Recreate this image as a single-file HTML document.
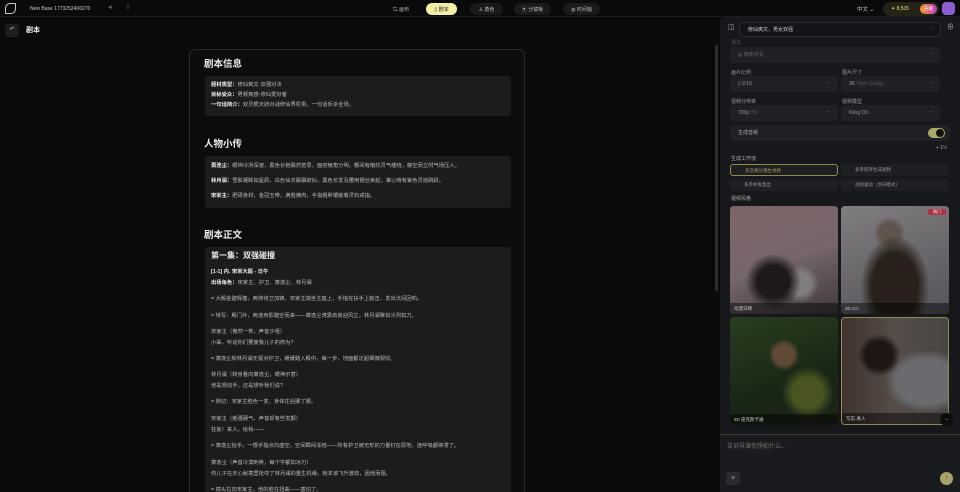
<!DOCTYPE html>
<html><head><meta charset="utf-8"><style>
*{box-sizing:border-box;margin:0;padding:0}
html{width:960px;height:492px;overflow:hidden}
body{width:960px;height:492px;overflow:hidden;background:#0a0a0a;font-family:"Liberation Sans","Noto Sans CJK SC",sans-serif;color:#ddd;position:relative}
.a{position:absolute}
.pill{position:absolute;top:3px;height:12px;border-radius:6px;background:#1a1a1c;font-size:5px;color:#bbb;display:flex;align-items:center;justify-content:center;gap:3px}
.card{left:189px;top:49px;width:336px;height:443px;border:1px solid #2a2a2a;border-bottom:none;border-radius:6px 6px 0 0;background:#0c0c0c;overflow:hidden}
.h{font-size:9.5px;font-weight:bold;color:#eee}
.box{background:#1c1c1e;border-radius:3px;position:absolute;left:15px;width:306px;font-size:5.3px;color:#bbb;padding:0 6px}
.box p{height:10px;line-height:10px;white-space:nowrap}
.box b{color:#eee}
.ep p{position:absolute;left:6px}
.rp{left:720px;top:17px;width:240px;height:475px;background:#17181b;border-radius:6px 0 0 0;overflow:hidden}
.lbl{position:absolute;font-size:5px;color:#9a9a9a}
.sel{position:absolute;height:16px;background:#202125;border-radius:4px;font-size:5px;color:#999;padding-left:8px;line-height:16px}
.sel:after{content:"⌄";position:absolute;right:7px;top:-2px;color:#666}
.btn{position:absolute;height:12px;width:108px;background:#1e1f23;border-radius:3px;font-size:4.5px;color:#999;line-height:12px;padding-left:14px}
.img{position:absolute;width:108px;height:108px;border-radius:4px;overflow:hidden}
.img:before{content:"";position:absolute;left:0;top:0;right:0;bottom:0;background:rgba(0,0,0,.3)}
.img span{position:absolute;left:0;right:0;bottom:0;height:11px;background:rgba(0,0,0,.45);font-size:4.5px;color:#ccc;padding-left:4px;line-height:11px}
</style></head><body>
<div class="a" style="left:0;top:0;width:960px;height:17px;border-bottom:1px solid #1c1c1c"></div>
<div class="a" style="left:5px;top:3px;width:11px;height:11px;border:1.3px solid #ccc;border-radius:5px 1px 5px 1px"></div>
<div class="a" style="left:30px;top:6px;font-size:5px;color:#ccc">New Base 1773252406270</div>
<div class="a" style="left:108px;top:4px;font-size:6px;color:#aaa">⋖</div>
<div class="a" style="left:125px;top:4px;font-size:6px;color:#aaa">⋮</div>
<div class="pill" style="left:386px;width:30px;background:none">⇆ 画布</div>
<div class="pill" style="left:426px;width:31px;background:#f3f0a6;color:#222">▯ 剧本</div>
<div class="pill" style="left:470px;width:33px">♙ 角色</div>
<div class="pill" style="left:514px;width:37px">▣ 分镜板</div>
<div class="pill" style="left:563px;width:37px">◍ 时间轴</div>
<div class="a" style="left:857px;top:5px;font-size:5.5px;color:#ccc">中文 ⌄</div>
<div class="a" style="left:883px;top:2px;width:56px;height:14px;border-radius:7px;background:#232318;font-size:5px;color:#e8d97a;line-height:14px;padding-left:8px">✦ 8,505</div>
<div class="a" style="left:920px;top:4px;width:17px;height:10px;border-radius:5px;background:linear-gradient(90deg,#f5a020,#c03ad0);font-size:4.5px;color:#fff;text-align:center;line-height:10px">升级</div>
<div class="a" style="left:942px;top:2px;width:13px;height:13px;border-radius:4px;background:#8b5fd0"></div>
<div class="a" style="left:5px;top:24px;width:14px;height:13px;border-radius:3px;background:#1d1d1d;font-size:6px;color:#bbb;text-align:center;line-height:13px">↶</div>
<div class="a h" style="left:26px;top:25px;font-size:7px">剧本</div>
<div class="a card">
<div class="a h" style="left:14px;top:6px">剧本信息</div>
<div class="box" style="top:26px;height:40px;padding-top:4px">
<p><b>题材类型：</b>修仙爽文·双强对决</p><p><b>目标受众：</b>男频爽感·修仙爱好者</p><p><b>一句话简介：</b>双灵根天骄对战修仙界权贵，一句话反杀全场。</p></div>
<div class="a h" style="left:14px;top:86px">人物小传</div>
<div class="box" style="top:106px;height:52px;padding-top:3px">
<p style="height:15px;line-height:15px"><b>萧逸尘：</b>眼神冷冽深邃，黑色长袍飘然若思，面容棱角分明，额间有暗纹灵气缠绕，御空而立时气场压人。</p>
<p style="height:15px;line-height:15px"><b>林月澜：</b>雪肤凝眸如星辰，白色仙衣飘飘欲仙，黑色长发及腰用银丝束起，掌心時有紫色灵焰跳跃。</p>
<p style="height:15px;line-height:15px"><b>宋家主：</b>肥硕身材，金冠玉带，满脸横肉，手指粗胖镶嵌着灵石戒指。</p></div>
<div class="a h" style="left:14px;top:177px">剧本正文</div>
<div class="box ep" style="top:197px;height:260px">
<p style="top:4px;font-size:8px;font-weight:bold;color:#eee">第一集：双强碰撞</p>
<p style="top:20px"><b>[1-1] 内. 宋家大殿 - 日午</b></p>
<p style="top:31px"><b>出场角色：</b>宋家主、护卫、萧逸尘、林月澜</p>
<p style="top:47px">= 大殿金碧辉煌，两排侍卫加锦。宋家主端坐主座上，手指在扶手上敲击，发出沉闷回响。</p>
<p style="top:64px">= 特写：殿门外，两道身影踏空而来——萧逸尘涛黑劲装迎风立，林月澜擎剑冷冽如刀。</p>
<p style="top:80px">宋家主（傲然一笑，声音沙哑）</p><p style="top:91px">小辈，听说你们要废我儿子的修为?</p>
<p style="top:107px">= 萧逸尘和林月澜无视点护卫，缓缓踏入殿中。每一步，地面都泛起细微裂纹。</p>
<p style="top:123px">林月澜（转身看向萧逸尘，眼神示意）</p><p style="top:134px">他是想动手，还是想听我们说?</p>
<p style="top:150px">= 侧切：宋家主脸色一变，身体往后挪了挪。</p>
<p style="top:167px">宋家主（勉强硬气，声音却有些发颤）</p><p style="top:178px">狂妄！来人，给我——</p>
<p style="top:194px">= 萧逸尘抬手，一根手指点向虚空。空间瞬间冻结——所有护卫被无形的力量钉在原地，连呼吸都停滞了。</p>
<p style="top:211px">萧逸尘（声音冷漠刺骨，每个字都如冰刃）</p><p style="top:222px">你儿子在天心秘境里抢夺了林月澜的重生机缘。她本该飞升渡劫，因他而阻。</p>
<p style="top:238px">= 镜头拉向宋家主，他的脸在扭曲——害怕了。</p>
</div></div>
<div class="a" style="left:715px;top:45px;width:3px;height:246px;background:#2e2e2e;border-radius:2px"></div>
<div class="a rp">
<div class="a" style="left:8px;top:6px;font-size:7px;color:#aaa">◫</div>
<div class="sel" style="left:19px;top:5px;width:202px;height:15px;line-height:15px;background:#141518;border:1px solid #2a2b2f;color:#ccc">修仙爽文，男女双强</div>
<div class="a" style="left:227px;top:5px;font-size:7px;color:#aaa">⊕</div>
<div class="lbl" style="left:11px;top:22px;color:#555">语言</div>
<div class="sel" style="left:10px;top:30px;width:210px;color:#666">◍ 简体中文</div>
<div class="lbl" style="left:11px;top:52px">画片比例</div><div class="lbl" style="left:122px;top:52px">图片尺寸</div>
<div class="sel" style="left:10px;top:59px;width:108px">▯ 9:16</div>
<div class="sel" style="left:121px;top:59px;width:99px">2K <span style="color:#555">High Quality</span></div>
<div class="lbl" style="left:11px;top:81px">视频分辨率</div><div class="lbl" style="left:122px;top:81px">视频模型</div>
<div class="sel" style="left:10px;top:88px;width:108px">720p <span style="color:#555">HD</span></div>
<div class="sel" style="left:121px;top:88px;width:99px">Kling O3</div>
<div class="sel" style="left:10px;top:108px;width:220px;color:#aaa">生成音频</div>
<div class="a" style="left:208px;top:111px;width:17px;height:10px;border-radius:5px;background:#aaa96a"><div class="a" style="left:8px;top:1px;width:8px;height:8px;border-radius:4px;background:#111"></div></div>
<div class="lbl" style="left:216px;top:128px;color:#aaa">+ 1½</div>
<div class="lbl" style="left:11px;top:138px;color:#aaa">生成工作流</div>
<div class="btn" style="left:10px;top:147px;border:1px solid #8d8a4f;color:#aa9e60">多宫格分镜生视频</div>
<div class="btn" style="left:121px;top:147px">多参照序生成视频</div>
<div class="btn" style="left:10px;top:162px">多参并发直出</div>
<div class="btn" style="left:121px;top:162px">首帧驱动（创日模式）</div>
<div class="lbl" style="left:11px;top:178px;color:#aaa">视频风格</div>
<div class="img" style="left:10px;top:189px;background:radial-gradient(circle at 40% 70%,#2a2424 0 16%,transparent 28%),radial-gradient(circle at 65% 72%,#bbb5b8 0 10%,transparent 18%),linear-gradient(160deg,#b89197,#a8939a 50%,#5a5254)"><span>动漫日韩</span></div>
<div class="img" style="left:121px;top:189px;background:radial-gradient(ellipse at 50% 75%,#3a3028 0 30%,transparent 45%),radial-gradient(circle at 45% 25%,#8a7a70 0 10%,transparent 16%),linear-gradient(160deg,#b7b4b8,#7c7880)"><span>3D CG</span><div class="a" style="right:3px;top:3px;width:18px;height:6px;background:#b0324a;border-radius:2px;font-size:4px;color:#fff;text-align:center;line-height:6px">热门</div></div>
<div class="img" style="left:10px;top:300px;background:radial-gradient(circle at 50% 35%,#8a6a50 0 11%,transparent 18%),radial-gradient(circle at 72% 70%,#6a7a30 0 14%,transparent 24%),linear-gradient(160deg,#3b5a2e,#24381f 60%,#2a3320)"><span>3D 皮克斯卡通</span></div>
<div class="img" style="left:121px;top:300px;border:1px solid #8d8a4f;background:radial-gradient(circle at 35% 35%,#2c201c 0 14%,transparent 22%),radial-gradient(ellipse at 80% 60%,#9a9aa0 0 25%,transparent 35%),linear-gradient(90deg,#5a4a40,#7a6e68 50%,#6a6460)"><span>写实·真人</span></div>
<div class="a" style="left:220px;top:396px;width:13px;height:13px;border-radius:7px;background:#0c0c0c;font-size:5px;text-align:center;line-height:13px;color:#bbb">⌄</div>
<div class="a" style="left:0;top:417px;width:240px;height:58px;background:#1a1b1e;border-top:1px solid #3a3a2a"></div>
<div class="lbl" style="left:7px;top:424px;font-size:6px;color:#777">告诉导演你想拍什么...</div>
<div class="a" style="left:6px;top:455px;width:14px;height:13px;border-radius:3px;background:#2a2b2f;font-size:7px;color:#bbb;text-align:center;line-height:13px">+</div>
<div class="a" style="left:220px;top:455px;width:13px;height:13px;border-radius:7px;background:#a8a36a;font-size:6px;color:#222;text-align:center;line-height:13px">↑</div>
</div>
</body></html>
